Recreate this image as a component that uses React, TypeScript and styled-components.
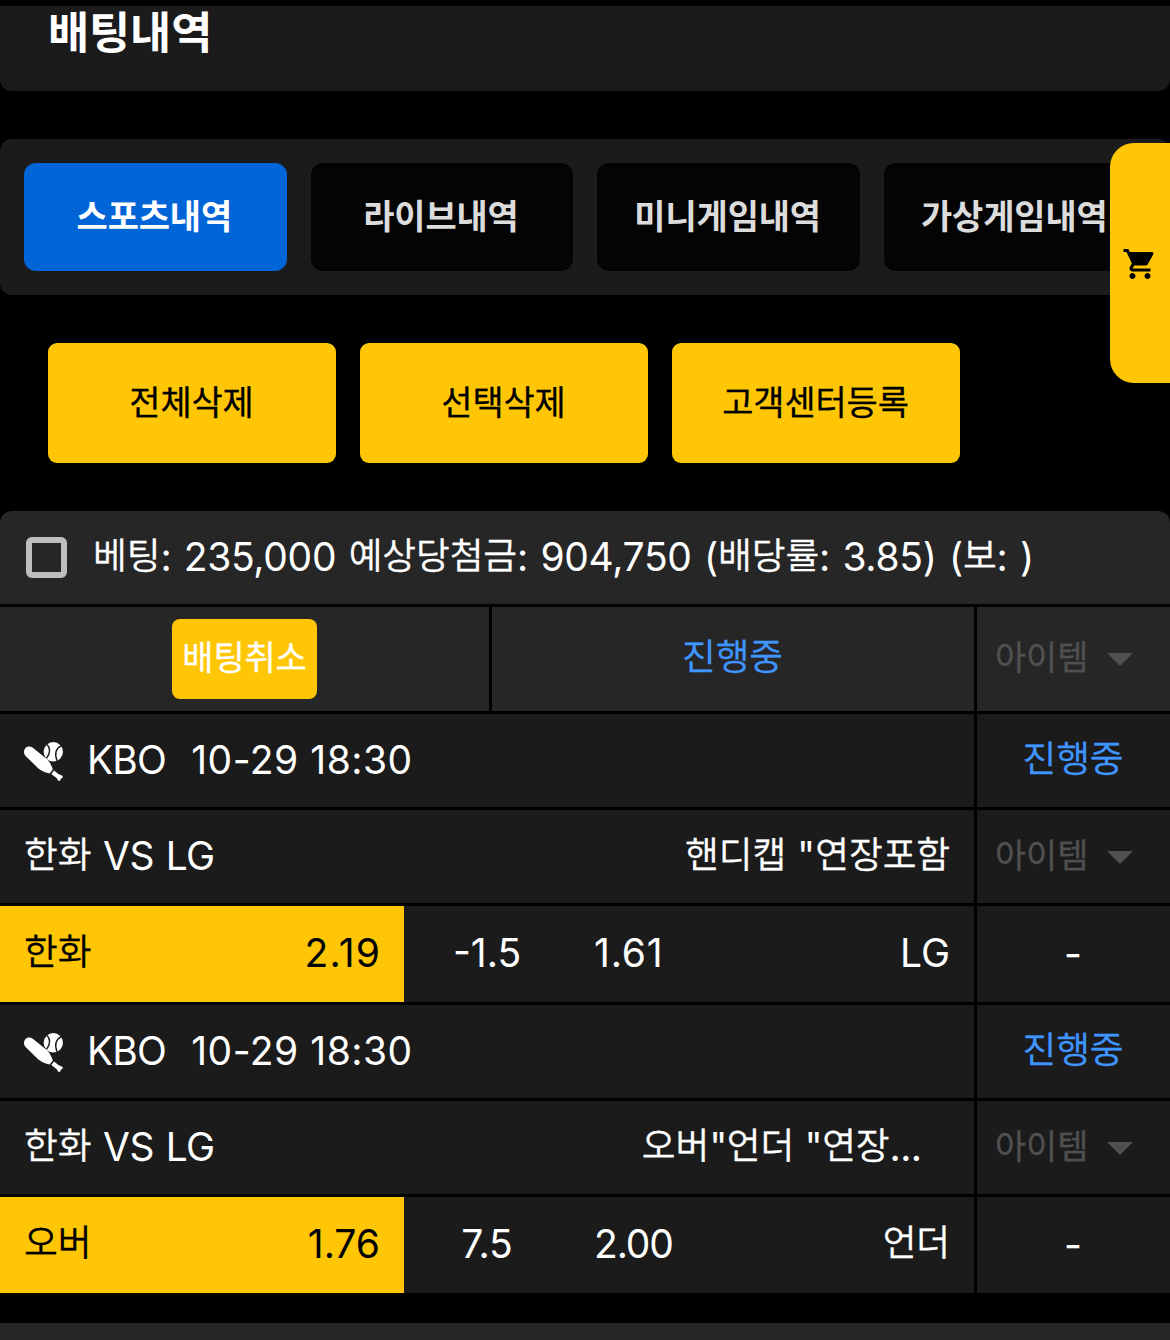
import React from "react";
import styled, { createGlobalStyle } from "styled-components";
import { MdShoppingCart } from "react-icons/md";

const GlobalStyle = createGlobalStyle`
  * { box-sizing: border-box; }
  html, body { margin: 0; padding: 0; background: #000; overflow: hidden; }
  button { border: 0; padding: 0; margin: 0; font: inherit; }
`;

const Page = styled.div`
  display: flex;
  flex-direction: column;
  width: 1170px;
  height: 1340px;
  padding-top: 6px;
  overflow: hidden;
  background: #000;
  color: #fff;
  font-family: Inter, "Noto Sans CJK KR", sans-serif;
`;

type TextProps = { $size: number; $spacing: number; $word: number; $lift: number };

const TextLine = styled.span<TextProps>`
  display: block;
  white-space: pre;
  font-size: ${(p) => p.$size}px;
  letter-spacing: ${(p) => p.$spacing}px;
  word-spacing: ${(p) => p.$word}px;
  line-height: 48px;
  margin-right: ${(p) => -p.$spacing}px;
  padding-bottom: ${(p) => p.$lift}px;
`;

/* Hangul runs slightly smaller and higher than the Latin glyphs beside it. */
const Hangul = styled.span<{ $weight: number }>`
  font-family: "Noto Sans CJK KR", sans-serif;
  font-size: 0.942em;
  font-weight: ${(p) => p.$weight};
  letter-spacing: -0.1px;
  line-height: 1;
  vertical-align: 2px;
  -webkit-text-stroke: ${(p) => (p.$weight < 500 ? 0.3 : 0)}px currentColor;
`;

type LabelProps = {
  children: string;
  size?: number;
  weight?: number;
  spacing?: number;
  word?: number;
  lift?: number;
};

function Label({ children, size = 39, weight = 350, spacing = 0, word = 0, lift = 2 }: LabelProps) {
  const runs = children.split(/([가-힣]+)/).filter(Boolean);
  return (
    <TextLine $size={size} $spacing={spacing} $word={word} $lift={lift}>
      {runs.map((run, i) => (/[가-힣]/.test(run) ? <Hangul key={i} $weight={weight}>{run}</Hangul> : run))}
    </TextLine>
  );
}

const TitleBar = styled.header`
  flex: none;
  height: 85px;
  padding: 2px 48px 0;
  border-radius: 0 0 12px 12px;
  background: #1b1b1b;
`;

const TabPanel = styled.nav`
  flex: none;
  display: flex;
  gap: 24px;
  height: 156px;
  margin-top: 48px;
  padding: 24px;
  overflow: hidden;
  border-radius: 12px;
  background: #1b1b1b;
`;

const Tab = styled.button<{ $active?: boolean }>`
  flex: none;
  display: flex;
  align-items: center;
  justify-content: center;
  width: 262.67px;
  height: 108px;
  padding: 2px 2px 0 0;
  border-radius: 12px;
  background: ${(p) => (p.$active ? "#0265d7" : "#040404")};
  color: ${(p) => (p.$active ? "#fff" : "#dcdcdc")};
`;

const Actions = styled.div`
  flex: none;
  display: flex;
  gap: 24px;
  padding: 48px;
`;

const ActionButton = styled.button`
  display: flex;
  align-items: center;
  justify-content: center;
  width: 288px;
  height: 120px;
  padding: 1px 1px 0 0;
  border-radius: 9px;
  background: #ffc605;
  color: #000;
`;

const BetCard = styled.section`
  flex: none;
  display: flex;
  flex-direction: column;
  gap: 3px;
  overflow: hidden;
  border-radius: 12px 12px 0 0;
`;

const Summary = styled.div`
  display: flex;
  align-items: center;
  gap: 26px;
  height: 93px;
  padding: 0 26px;
  background: #262626;
`;

const Checkbox = styled.span`
  width: 41px;
  height: 41px;
  border: 6px solid #bebebe;
  border-radius: 6px;
`;

const Row = styled.div<{ $height: number; $columns: string }>`
  display: grid;
  grid-template-columns: ${(p) => p.$columns};
  column-gap: 3px;
  height: ${(p) => p.$height}px;
`;

const Cell = styled.div<{ $raised?: boolean; $justify?: string; $color?: string }>`
  display: flex;
  align-items: center;
  justify-content: ${(p) => p.$justify ?? "center"};
  min-width: 0;
  padding: ${(p) => (p.$justify ? "0 24px" : "0 1px 0 0")};
  background: ${(p) => (p.$raised ? "#262626" : "#1b1b1b")};
  color: ${(p) => p.$color ?? "#fff"};
`;

const CancelButton = styled.button`
  display: flex;
  align-items: center;
  justify-content: center;
  width: 145px;
  height: 80px;
  margin-left: 1px;
  border-radius: 8px;
  background: #ffc605;
  color: #fff;
`;

const ItemCell = styled(Cell)`
  justify-content: flex-start;
  gap: 19px;
  padding: 0 0 0 18px;
  color: #505050;
`;

const Caret = styled.span`
  border: 13px solid transparent;
  border-top-color: #505050;
  border-bottom: 0;
  margin-top: 1px;
`;

const LeagueInfo = styled.div`
  display: flex;
  align-items: center;
`;

const LeagueIcon = styled.svg`
  width: 40px;
  height: 40px;
  margin-right: 23px;
`;

const Kickoff = styled.div`
  margin-left: 24.5px;
`;

const MarketName = styled.div<{ $inset: number }>`
  padding-right: ${(p) => p.$inset}px;
`;

const Odds = styled.div`
  display: grid;
  grid-template-columns: 404px 166px 404px;
  background: #1b1b1b;
`;

const Pick = styled.div<{ $selected?: boolean }>`
  display: flex;
  align-items: center;
  justify-content: space-between;
  padding: 0 24px;
  background: ${(p) => (p.$selected ? "#ffc605" : "transparent")};
  color: ${(p) => (p.$selected ? "#000" : "#fff")};
`;

const Line = styled.div`
  display: flex;
  align-items: center;
  justify-content: center;
`;

const NextCard = styled.section`
  flex: none;
  height: 93px;
  margin-top: 30px;
  background: #262626;
`;

const CartTab = styled.button`
  position: absolute;
  top: 143px;
  left: 1110px;
  display: flex;
  align-items: center;
  justify-content: center;
  width: 60px;
  height: 240px;
  padding-top: 2px;
  border-radius: 24px 0 0 24px;
  background: #ffc605;
  color: #000;
`;

function BaseballIcon() {
  return (
    <LeagueIcon viewBox="0 0 40 40">
      <circle cx="29.3" cy="10.8" r="9.7" fill="#fff" />
      <path
        d="M22.6 3.2 C26.6 6.4 26.6 12.4 22.4 17.4 M37.4 4.6 C31.8 7.6 30.4 13.2 33.2 20"
        fill="none"
        stroke="#1b1b1b"
        strokeWidth="1.4"
      />
      <path
        d="M1.4 7 C3.2 5 6.4 4.9 8.8 6.8 L23.4 18.4 C26 21 27.6 24.8 28.8 28.6 L25.6 32.6 C21.6 31.6 17.8 30 14.4 27.4 L1.8 15.2 C-.5 13 -.5 9.4 1.4 7Z"
        fill="#fff"
      />
      <path d="M30 29.4 L34.8 33.2 L38.4 34.8 L38.7 36.8 L36.8 37.8 L36 40 L34 39.4 L32.8 37.2 L27.3 32.9Z" fill="#fff" />
    </LeagueIcon>
  );
}

function ItemSelect({ raised }: { raised?: boolean }) {
  return (
    <ItemCell $raised={raised}>
      <Label size={36} weight={400} lift={0}>아이템</Label>
      <Caret />
    </ItemCell>
  );
}

type Odd = { value: string; spacing: number };

type Game = {
  market: string;
  inset: number;
  home: string;
  homeOdds: Odd;
  line: string;
  awayOdds: Odd;
  away: string;
};

const games: Game[] = [
  {
    market: '핸디캡 "연장포함',
    inset: 0,
    home: "한화",
    homeOdds: { value: "2.19", spacing: 1.3 },
    line: "-1.5",
    awayOdds: { value: "1.61", spacing: 0.8 },
    away: "LG",
  },
  {
    market: '오버"언더 "연장...',
    inset: 28,
    home: "오버",
    homeOdds: { value: "1.76", spacing: 0 },
    line: "7.5",
    awayOdds: { value: "2.00", spacing: -1.1 },
    away: "언더",
  },
];

const COLUMNS = "974px 193px";

function GameRows({ game }: { game: Game }) {
  return (
    <>
      <Row $height={93} $columns={COLUMNS}>
        <Cell $justify="flex-start">
          <LeagueInfo>
            <BaseballIcon />
            <Label spacing={-0.9}>KBO</Label>
            <Kickoff>
              <Label spacing={0.5}>10-29 18:30</Label>
            </Kickoff>
          </LeagueInfo>
        </Cell>
        <Cell $color="#4096ff">
          <Label>진행중</Label>
        </Cell>
      </Row>
      <Row $height={93} $columns={COLUMNS}>
        <Cell $justify="space-between">
          <Label spacing={-0.5} word={1.2}>한화 VS LG</Label>
          <MarketName $inset={game.inset}>
            <Label spacing={game.inset ? -0.6 : 0}>{game.market}</Label>
          </MarketName>
        </Cell>
        <ItemSelect />
      </Row>
      <Row $height={96} $columns={COLUMNS}>
        <Odds>
          <Pick $selected>
            <Label>{game.home}</Label>
            <Label spacing={game.homeOdds.spacing}>{game.homeOdds.value}</Label>
          </Pick>
          <Line>
            <Label>{game.line}</Label>
          </Line>
          <Pick>
            <Label spacing={game.awayOdds.spacing}>{game.awayOdds.value}</Label>
            <Label>{game.away}</Label>
          </Pick>
        </Odds>
        <Cell>
          <Label lift={0}>-</Label>
        </Cell>
      </Row>
    </>
  );
}

export default function App() {
  return (
    <Page>
      <GlobalStyle />
      <TitleBar>
        <Label size={47.5} weight={700}>배팅내역</Label>
      </TitleBar>
      <TabPanel>
        {["스포츠내역", "라이브내역", "미니게임내역", "가상게임내역"].map((name, i) => (
          <Tab key={name} $active={i === 0}>
            <Label size={36} weight={700} lift={0}>{name}</Label>
          </Tab>
        ))}
      </TabPanel>
      <Actions>
        {["전체삭제", "선택삭제", "고객센터등록"].map((name) => (
          <ActionButton key={name}>
            <Label size={36} weight={400} lift={0}>{name}</Label>
          </ActionButton>
        ))}
      </Actions>
      <BetCard>
        <Summary>
          <Checkbox />
          <Label spacing={-0.3} word={1.75}>베팅: 235,000 예상당첨금: 904,750 (배당률: 3.85) (보: )</Label>
        </Summary>
        <Row $height={104} $columns="489px 482px 193px">
          <Cell $raised>
            <CancelButton>
              <Label size={36} weight={400} lift={0}>배팅취소</Label>
            </CancelButton>
          </Cell>
          <Cell $raised $color="#4096ff">
            <Label>진행중</Label>
          </Cell>
          <ItemSelect raised />
        </Row>
        {games.map((game) => (
          <GameRows key={game.market} game={game} />
        ))}
      </BetCard>
      <NextCard />
      <CartTab aria-label="cart">
        <MdShoppingCart size={36} />
      </CartTab>
    </Page>
  );
}
